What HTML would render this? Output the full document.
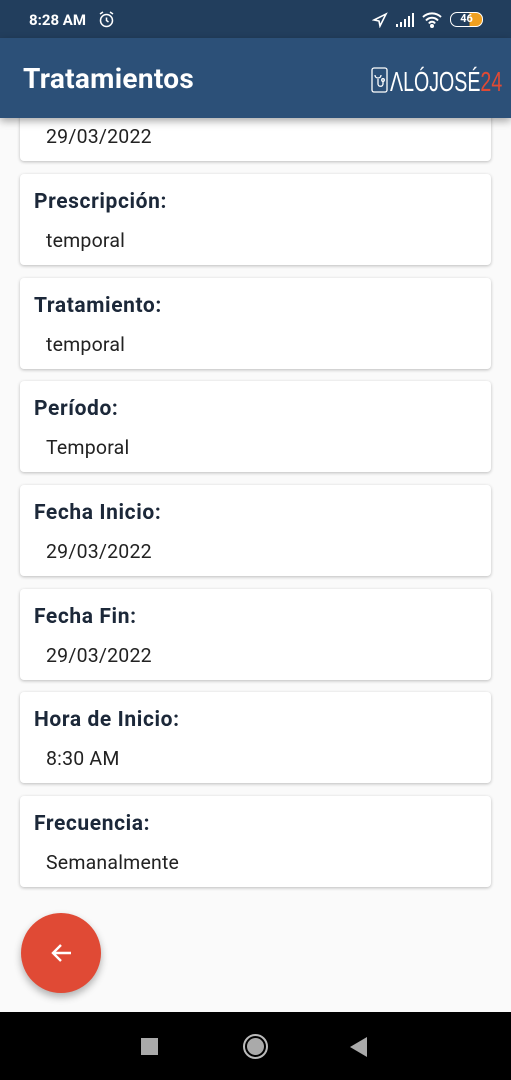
<!DOCTYPE html>
<html><head><meta charset="utf-8"><style>
*{margin:0;padding:0;box-sizing:border-box}
body{width:511px;height:1080px;background:#fafafa;font-family:"Roboto","Liberation Sans",sans-serif;position:relative;overflow:hidden}
.sb{position:absolute;top:0;left:0;width:511px;height:38px;background:#223e5d;color:#fff;font-size:15px;font-weight:bold}
.hd{position:absolute;top:38px;left:0;width:511px;height:80px;background:#2c5078;box-shadow:0 3px 8px rgba(0,0,0,.35);z-index:2}
.hd h1{position:absolute;left:23px;top:24px;color:#fff;font-size:28px;font-weight:bold;letter-spacing:0.3px}
.card{position:absolute;left:20px;width:471px;height:91px;background:#fff;border-radius:4px;box-shadow:0 1px 3px rgba(0,0,0,.25)}
.card .l{position:absolute;left:14px;top:16px;font-size:21px;font-weight:bold;color:#1c2839;letter-spacing:0.6px}
.card .v{position:absolute;left:26px;top:55px;font-size:19.5px;color:#222;letter-spacing:0.2px}
.fab{position:absolute;left:21px;top:913px;width:80px;height:80px;border-radius:50%;background:#e04a35;box-shadow:0 4px 8px rgba(0,0,0,.3)}
.nav{position:absolute;top:1012px;left:0;width:511px;height:68px;background:#000}
</style></head><body>
<div class="sb"><span style="position:absolute;left:29px;top:11px">8:28 AM</span>
<svg style="position:absolute;left:98px;top:11px" width="17" height="17" viewBox="0 0 17 17" fill="none" stroke="#fff" stroke-width="1.5"><circle cx="8.5" cy="9.5" r="6"/><path d="M8.5 6.5v3l2 1.5M2 3l3-2M15 3l-3-2"/></svg>
<svg style="position:absolute;left:372px;top:12px" width="16" height="16" viewBox="0 0 16 16" fill="none" stroke="#fff" stroke-width="1.6"><path d="M2 8l12-6-6 12-1-5z"/></svg>
<svg style="position:absolute;left:395px;top:12px" width="20" height="16" viewBox="0 0 20 16" fill="#fff"><rect x="1" y="12" width="2" height="3"/><rect x="5" y="10" width="2" height="5"/><rect x="9" y="7" width="2" height="8"/><rect x="13" y="4" width="2" height="11"/><rect x="17" y="1" width="2" height="14"/></svg>
<svg style="position:absolute;left:421px;top:11px" width="22" height="17" viewBox="0 0 22 17" fill="none" stroke="#fff" stroke-width="2"><path d="M2 6a13 13 0 0 1 18 0M5 9.5a8 8 0 0 1 12 0M8 12.5a3.5 3.5 0 0 1 6 0"/><circle cx="11" cy="15" r="1" fill="#fff"/></svg>
<div style="position:absolute;left:450px;top:12px;width:33px;height:15px;border:1.5px solid #fff;border-radius:7px;font-size:11px;line-height:12px;text-align:center;background:linear-gradient(90deg,transparent 60%,#f0a020 60%)">46</div>
</div>
<div class="hd"><h1>Tratamientos</h1>
<svg style="position:absolute;left:371px;top:29px" width="17" height="26" viewBox="0 0 17 26" fill="none" stroke="#fff" stroke-width="1.3"><rect x="1" y="1" width="15" height="24" rx="2"/><path d="M4 8c0 4 6 4 6 0M7 12v5c0 3 5 3 5 0v-3"/><circle cx="12" cy="13" r="1.3"/></svg>
<div style="position:absolute;left:390px;top:28px;font-size:28px;color:#fff;transform:scaleX(.7);transform-origin:left;font-family:'Liberation Sans Narrow','Liberation Sans',sans-serif;font-weight:300">ΛLÓJOSÉ<span style="color:#e04a35">24</span></div>
</div>
<div class="card" style="top:70px"><div class="v">29/03/2022</div></div>
<div class="card" style="top:174px"><div class="l">Prescripción:</div><div class="v">temporal</div></div>
<div class="card" style="top:278px"><div class="l">Tratamiento:</div><div class="v">temporal</div></div>
<div class="card" style="top:381px"><div class="l">Período:</div><div class="v">Temporal</div></div>
<div class="card" style="top:485px"><div class="l">Fecha Inicio:</div><div class="v">29/03/2022</div></div>
<div class="card" style="top:589px"><div class="l">Fecha Fin:</div><div class="v">29/03/2022</div></div>
<div class="card" style="top:692px"><div class="l">Hora de Inicio:</div><div class="v">8:30 AM</div></div>
<div class="card" style="top:796px"><div class="l">Frecuencia:</div><div class="v">Semanalmente</div></div>
<div class="fab"><svg style="position:absolute;left:28px;top:28px" width="24" height="24" viewBox="0 0 24 24" fill="none" stroke="#fff" stroke-width="2.4"><path d="M22 12H4M12 4l-8 8 8 8"/></svg></div>
<div class="nav">
<div style="position:absolute;left:141px;top:26px;width:17px;height:17px;background:#aaa"></div>
<div style="position:absolute;left:243px;top:22px;width:25px;height:25px;border-radius:50%;border:2px solid #bbb;padding:2px"><div style="width:100%;height:100%;border-radius:50%;background:#aaa"></div></div>
<svg style="position:absolute;left:350px;top:25px" width="18" height="20"><path d="M0 10L17 0V20z" fill="#aaa"/></svg>
</div>
</body></html>
